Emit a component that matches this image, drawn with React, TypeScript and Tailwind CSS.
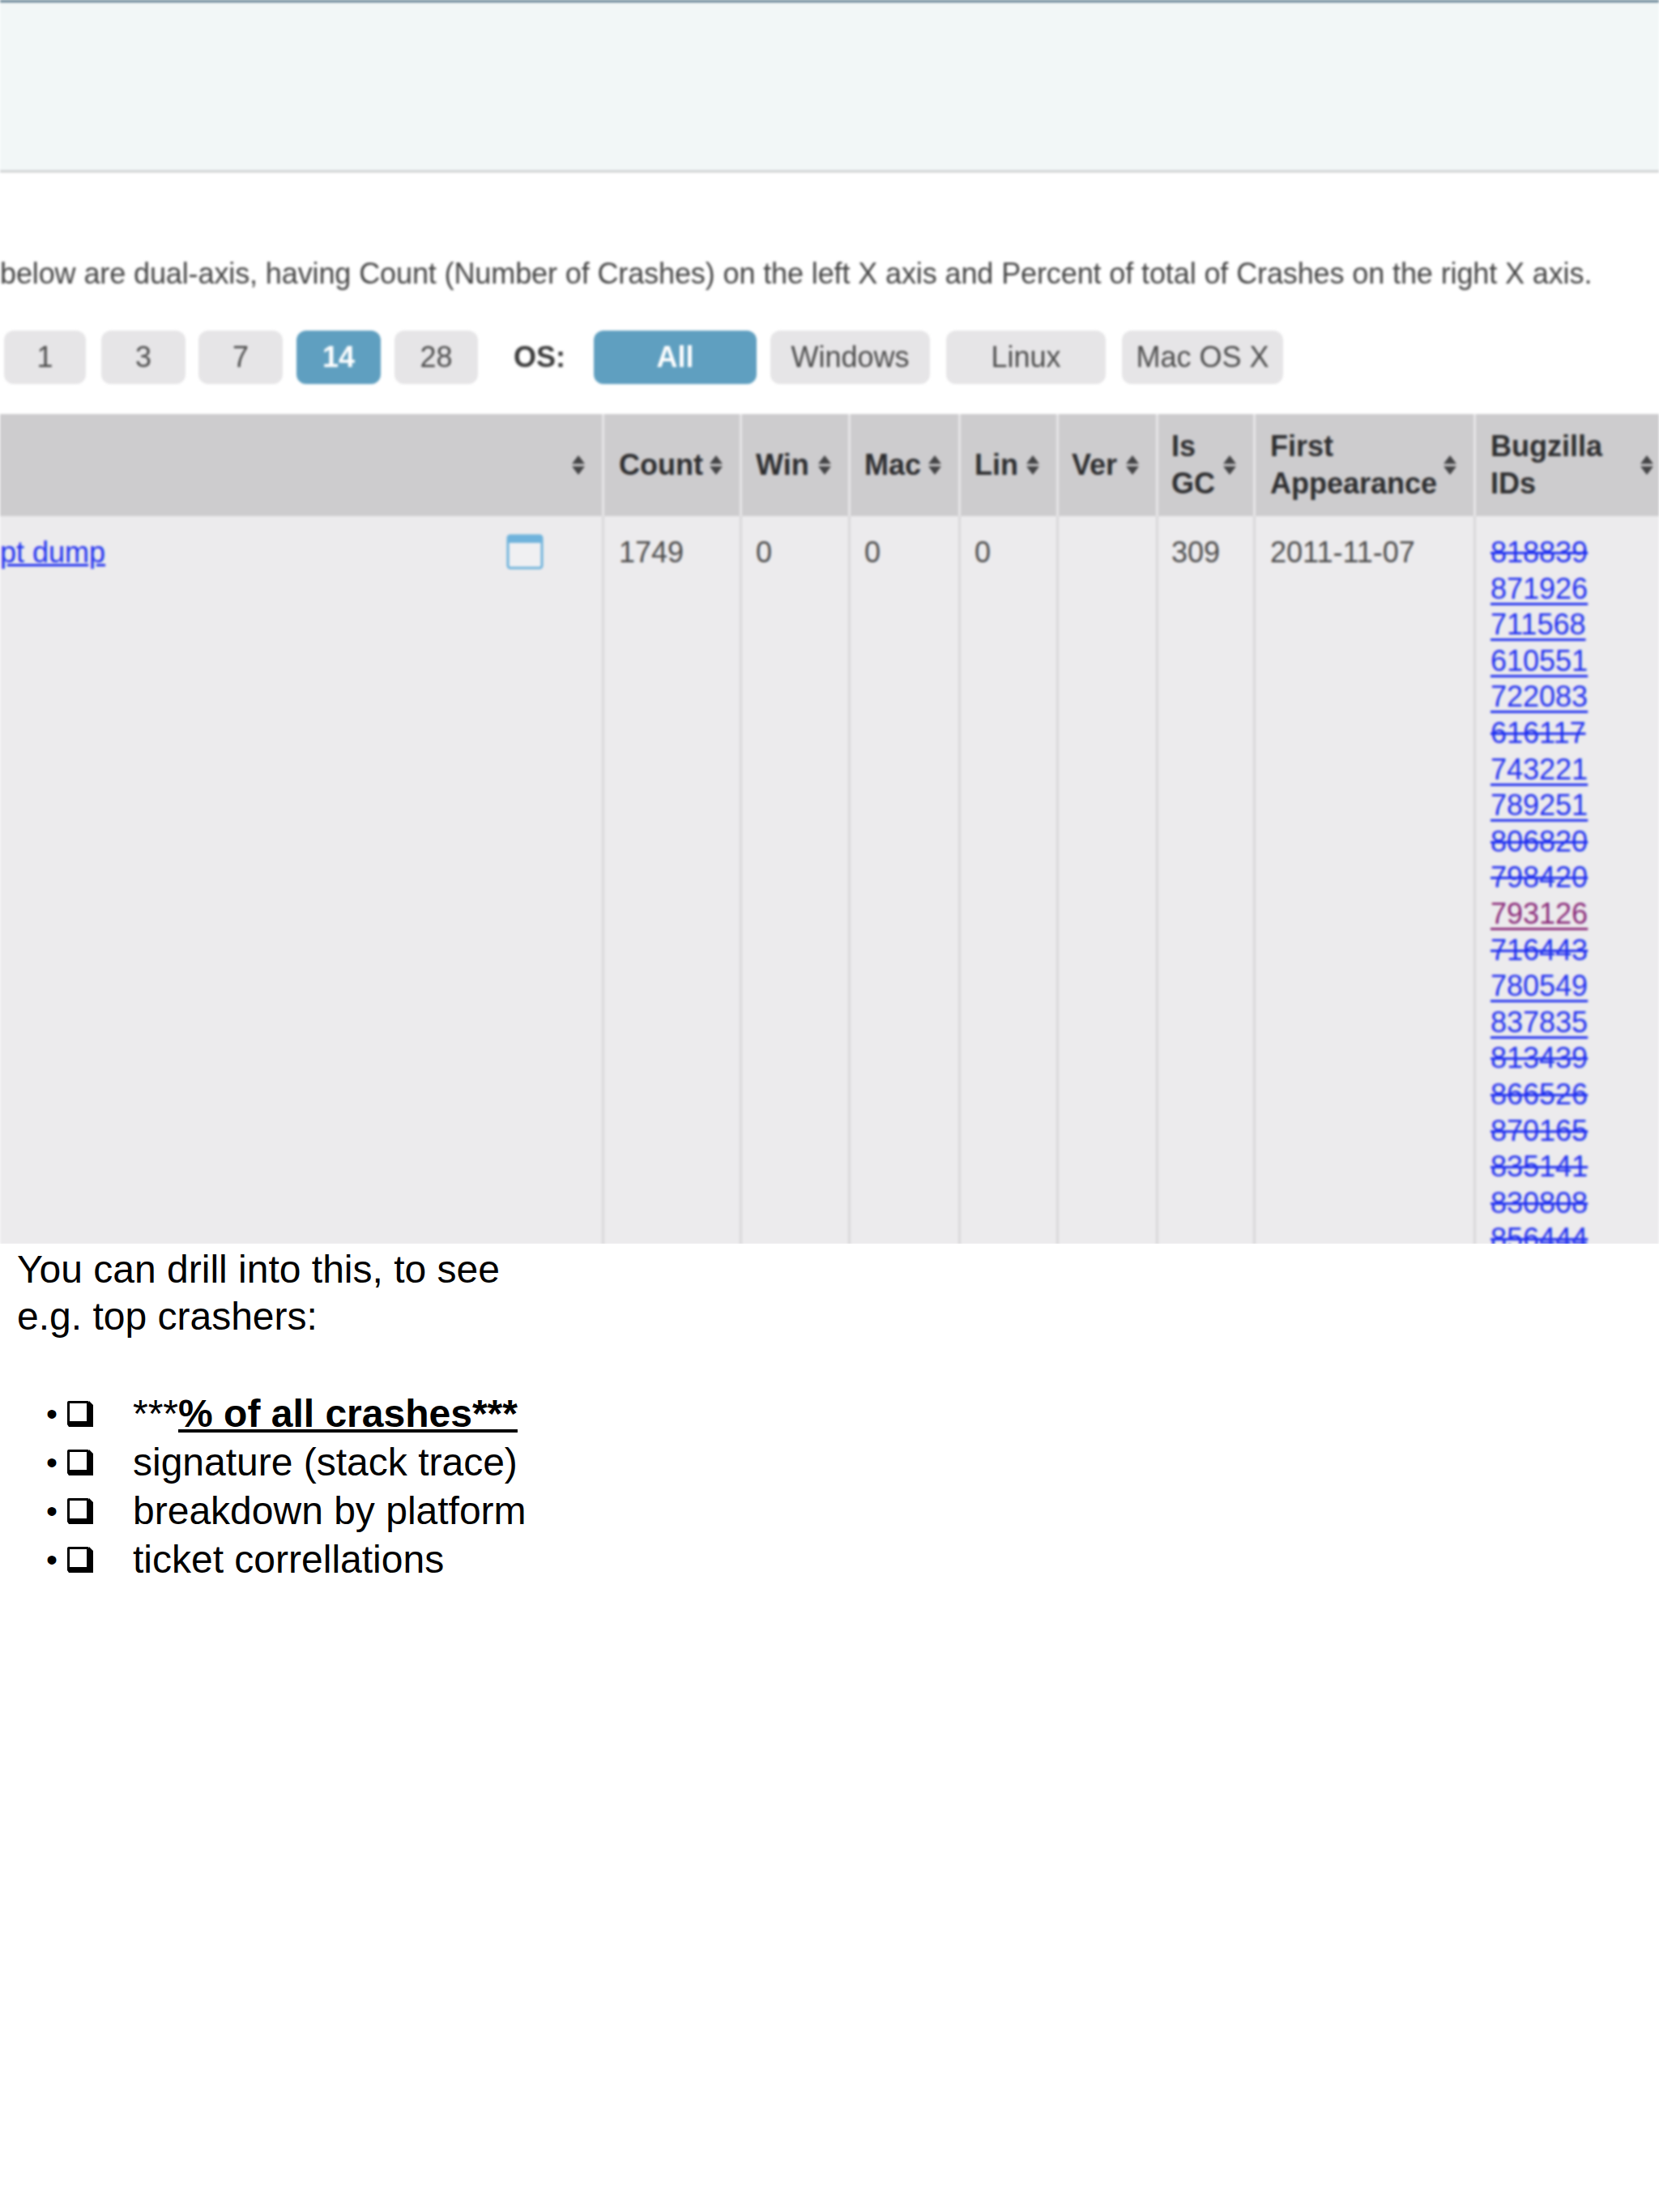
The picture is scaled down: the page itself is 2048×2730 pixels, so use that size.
import React from "react";

function Sort() {
  return (
    <svg width="18" height="24" viewBox="0 0 18 24" className="shrink-0">
      <path d="M9 0 L17 10.5 H1 Z M9 24 L17 13.5 H1 Z" fill="#434345" />
    </svg>
  );
}

function Cal() {
  return (
    <svg width="46" height="44" viewBox="0 0 46 44">
      <rect x="2" y="2" width="42" height="40" rx="3" fill="#f0f0f2" stroke="#6fb3dc" strokeWidth="3" />
      <rect x="2" y="2" width="42" height="9" fill="#6fb3dc" />
    </svg>
  );
}

function Box() {
  return (
    <svg width="34" height="34" viewBox="0 0 34 34">
      <path d="M3 33 L1 30 V3 Q1 1 3 1 H26 Q28 1 28 3 V1 L33 6 V33 Z" fill="#000" />
      <path d="M4 4 H25 V26 H4 Z" fill="#fff" />
    </svg>
  );
}

const ids: [string, "s" | "u" | "v"][] = [
  ["818839", "s"], ["871926", "u"], ["711568", "u"], ["610551", "u"], ["722083", "u"],
  ["616117", "s"], ["743221", "u"], ["789251", "u"], ["806820", "s"], ["798420", "s"],
  ["793126", "v"], ["716443", "s"], ["780549", "u"], ["837835", "u"], ["813439", "s"],
  ["866526", "s"], ["870165", "s"], ["835141", "s"], ["830808", "s"], ["856444", "s"],
];

function Btn({ label, cls, active }: { label: string; cls: string; active?: boolean }) {
  return (
    <div
      className={
        "h-[66px] rounded-[12px] flex items-center justify-center " +
        (active ? "bg-[#5f9fc0] text-white font-bold " : "bg-[#e6e5e7] text-[#4c4c4c] ") +
        cls
      }
    >
      {label}
    </div>
  );
}

const hCell = "bg-[#cdccce] h-[126px] flex items-center justify-between pr-[20px] font-bold text-[#2e2e30] leading-[46px] border-r-[3px] border-[#e6e5e7]";
const bCell = "bg-[#ecebed] h-[899px] pt-[22px] text-[#4c4c4c] leading-[46px] border-r-[3px] border-[#d9d8da] overflow-hidden";

export default function App() {
  return (
    <div className="w-[2048px] h-[2730px] bg-white overflow-hidden font-['Liberation_Sans',Arial,sans-serif]">
      <div className="w-[2048px] h-[1535px] overflow-hidden">
        <div className="blur-[1.4px] text-[36px]">
          <div className="h-[3px] bg-[#5d7c8e]" />
          <div className="h-[210px] bg-[#f2f7f7] border-b-[3px] border-[#cfd2d3]" />
          <div className="mt-[101px] h-[48px] leading-[48px] whitespace-nowrap text-[#444444] text-[36px] tracking-[-0.11px]">
            below are dual-axis, having Count (Number of Crashes) on the left X axis and Percent of total of Crashes on the right X axis.
          </div>
          <div className="mt-[46px] flex items-center pl-[5px]">
            <Btn label="1" cls="w-[101px]" />
            <Btn label="3" cls="w-[104px] ml-[19px]" />
            <Btn label="7" cls="w-[104px] ml-[16px]" />
            <Btn label="14" cls="w-[104px] ml-[17px]" active />
            <Btn label="28" cls="w-[103px] ml-[17px]" />
            <div className="ml-[44px] w-[63px] font-bold text-[#3c3c3c]">OS:</div>
            <Btn label="All" cls="w-[201px] ml-[36px]" active />
            <Btn label="Windows" cls="w-[197px] ml-[17px]" />
            <Btn label="Linux" cls="w-[197px] ml-[20px]" />
            <Btn label="Mac OS X" cls="w-[199px] ml-[20px]" />
          </div>
          <div className="mt-[37px] grid grid-cols-[746px_170px_134px_136px_121px_123px_120px_272px_226px]">
            <div className={hCell + " justify-end"}><Sort /></div>
            <div className={hCell + " pl-[18px]"}><span>Count</span><Sort /></div>
            <div className={hCell + " pl-[17px]"}><span>Win</span><Sort /></div>
            <div className={hCell + " pl-[17px]"}><span>Mac</span><Sort /></div>
            <div className={hCell + " pl-[17px]"}><span>Lin</span><Sort /></div>
            <div className={hCell + " pl-[16px]"}><span>Ver</span><Sort /></div>
            <div className={hCell + " pl-[16px]"}><span>Is<br />GC</span><Sort /></div>
            <div className={hCell + " pl-[18px]"}><span>First<br />Appearance</span><Sort /></div>
            <div className="bg-[#cdccce] h-[126px] flex items-center justify-between pl-[18px] pr-[6px] font-bold text-[#2e2e30] leading-[46px]"><span>Bugzilla<br />IDs</span><Sort /></div>

            <div className="bg-[#ecebed] h-[899px] pt-[22px] border-r-[3px] border-[#d9d8da] flex items-start justify-between pr-[72px] leading-[46px]">
              <a className="text-[#1f30f0] underline">pt dump</a>
              <Cal />
            </div>
            <div className={bCell + " pl-[18px]"}>1749</div>
            <div className={bCell + " pl-[17px]"}>0</div>
            <div className={bCell + " pl-[17px]"}>0</div>
            <div className={bCell + " pl-[17px]"}>0</div>
            <div className={bCell + " pl-[16px]"}></div>
            <div className={bCell + " pl-[16px]"}>309</div>
            <div className={bCell + " pl-[18px]"}>2011-11-07</div>
            <div className="bg-[#ecebed] h-[899px] pl-[18px] pt-[23px] leading-[44.6px] overflow-hidden">
              {ids.map(([id, k]) => (
                <div
                  key={id}
                  className={
                    k === "s"
                      ? "text-[#1f30f0] line-through"
                      : k === "v"
                      ? "text-[#8a2a7a] underline underline-offset-[5px]"
                      : "text-[#1f30f0] underline underline-offset-[5px]"
                  }
                >
                  {id}
                </div>
              ))}
            </div>
          </div>
        </div>
      </div>
      <div className="pl-[21px] pt-[3px] text-[48px] text-black leading-[58px]">
        <div>You can drill into this, to see</div>
        <div>e.g. top crashers:</div>
      </div>
      <div className="mt-[61px] text-[48px] text-black leading-[60px]">
        {[
          <span>***<span className="font-bold underline">% of all crashes***</span></span>,
          "signature (stack trace)",
          "breakdown by platform",
          "ticket correllations",
        ].map((t, i) => (
          <div key={i} className="flex items-center h-[60px]">
            <span className="w-[82px] pl-[57px] text-[40px]">•</span>
            <span className="w-[82px] flex"><Box /></span>
            <span>{t}</span>
          </div>
        ))}
      </div>
    </div>
  );
}
